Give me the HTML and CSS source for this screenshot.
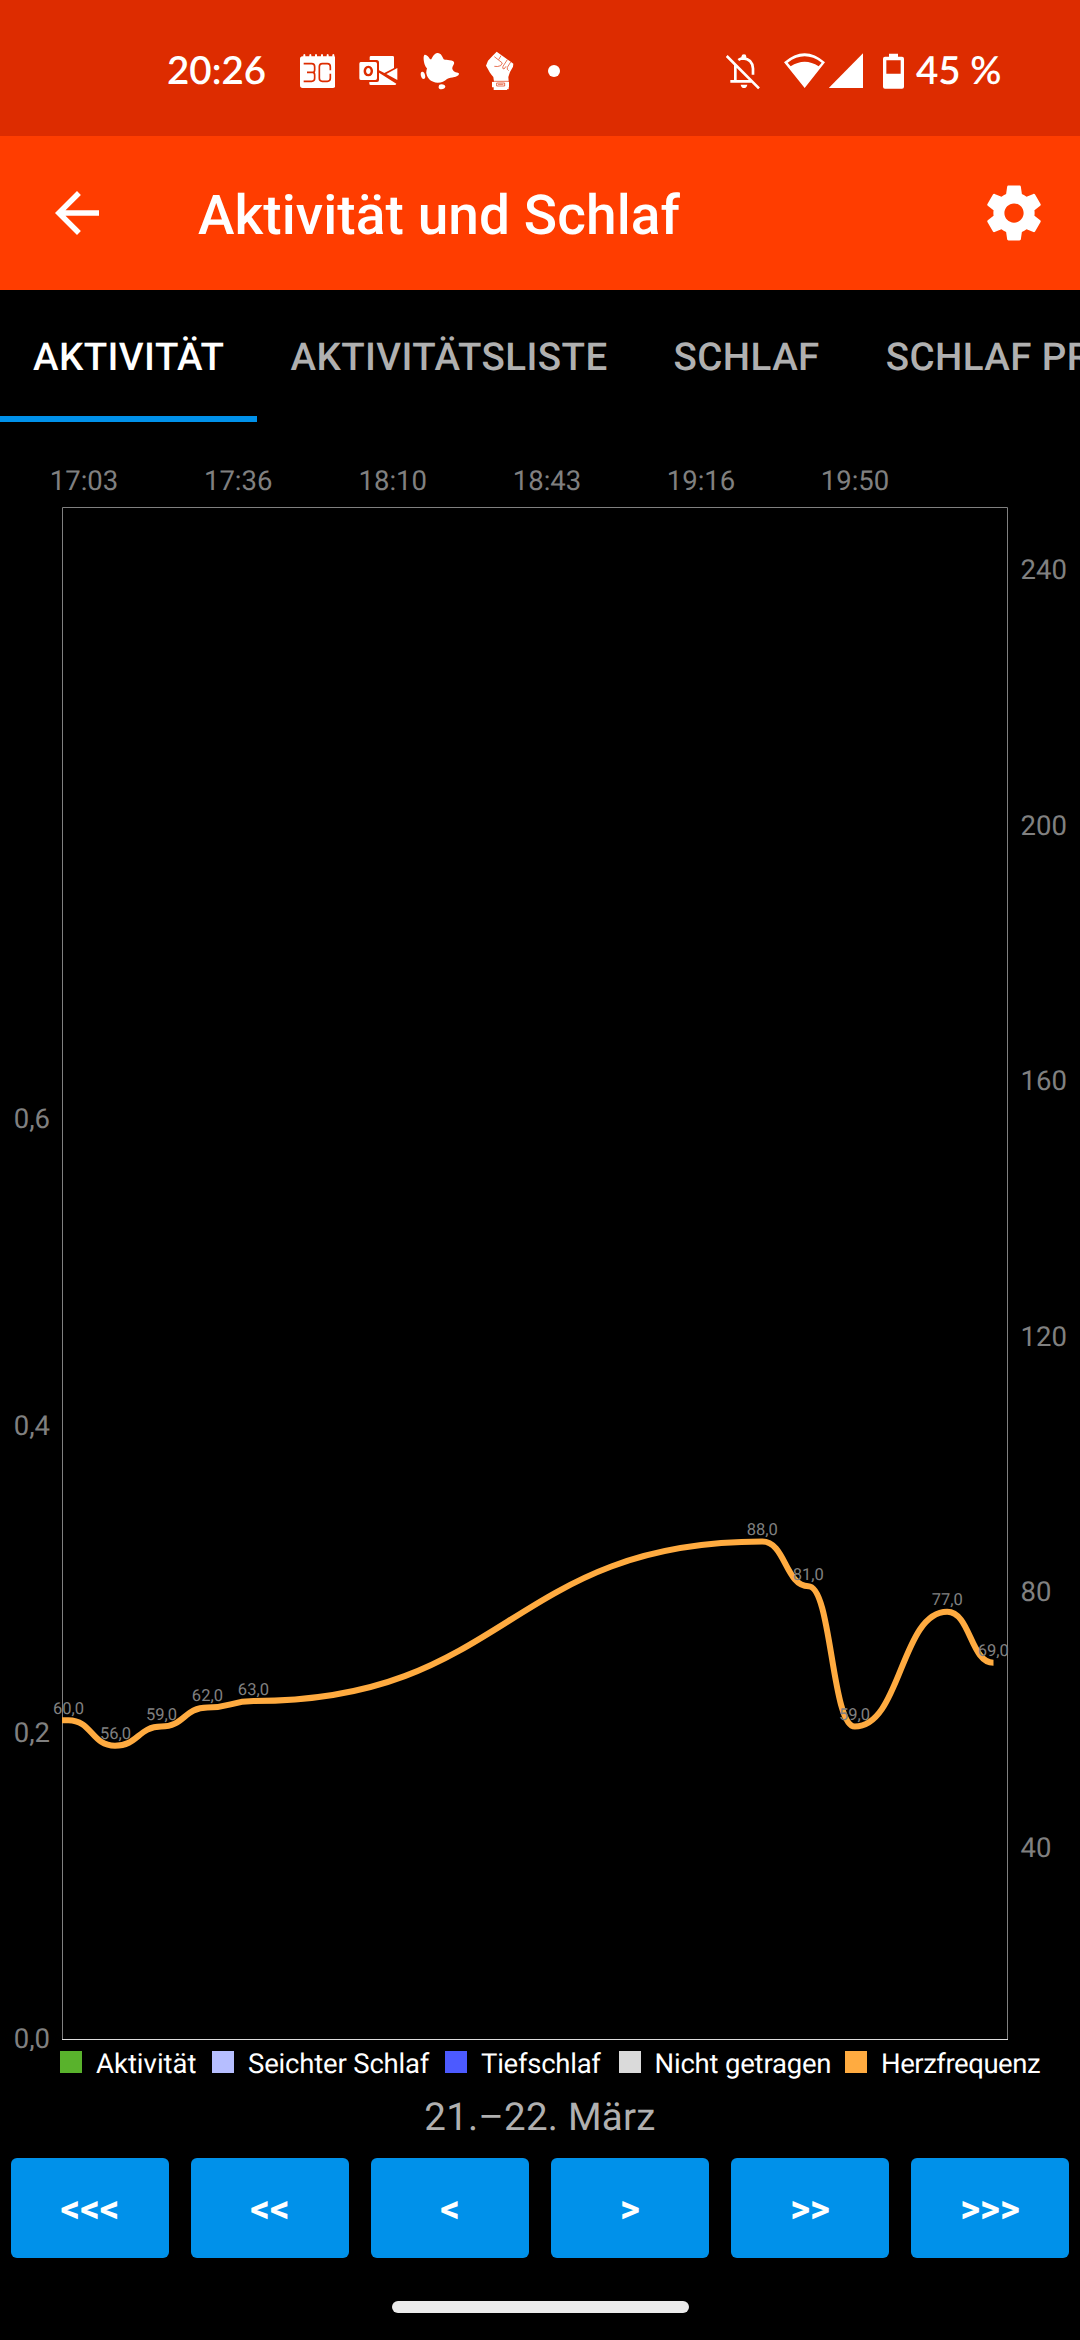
FILE: index.html
```html
<!DOCTYPE html>
<html lang="de">
<head>
<meta charset="utf-8">
<title>Aktivität und Schlaf</title>
<link rel="stylesheet" href="styles.css">
</head>
<body>
<div class="status">
  <span class="clock">20:26</span>
  <svg class="cal" width="36" height="40" viewBox="477 60 108 120">
    <path fill="#fff" d="M486 79h4v-5q3-4 6 0v5h12v-5q3-4 6 0v5h11v-5q3-4 6 0v5h12v-5q3-4 6 0v5h11v-5q3-4 6 0v5h11v-5q3-4 6 0v5q3 1 3 6v81q0 8-8 8h-90q-8 0-8-8V87q0-8 8-8z"/>
    <path class="cut" d="M491 101h24q9 0 9 9v9q0 8-6 8h-17M518 127q6 0 6 8v10q0 9-9 9h-24M571 121v-11q0-9-9-9h-15q-9 0-9 9v35q0 9 9 9h15q9 0 9-9v-14"/>
  </svg>
  <svg class="outlook" width="39" height="40" viewBox="657 60 117 120">
    <path fill="#fff" fill-rule="evenodd" d="M662 96h44q5 0 5 5v44q0 5-5 5h-44q-4 0-4-5v-44q0-5 4-5zM685 107c-19 0-19 32 0 32s19-32 0-32zM685 114c9 0 9 18 0 18s-9-18 0-18z"/>
    <path fill="#fff" d="M693 78h65q4 0 4 4v32l-29 15-16-8V98q0-8-7-8h-21v-8q0-4 4-4zM772 114v36l-33-18zM717 128l52 33q-1 4-5 4h-72q-4 0-4-4v-5h23q6 0 6-6z"/>
  </svg>
  <svg class="splash" width="40" height="40" viewBox="840 60 120 120">
    <path fill="#fff" d="M853 75c5-3 14 6 17 13l4 0c4-8 9-18 18-19 11-1 15 11 19 19 5 3 11 1 18 3 9 1 15 3 13 10-2 6-6 10-5 15 1 6 6 9 10 11 5 1 11 2 10 5-1 6-9 8-14 9-8 2-15 2-22 6-7 7-16 11-28 11-19 0-31-12-34-28-1-5 1-10 2-15-9-7-13-34-8-40zM845 126c5-2 9 3 10 9 2 8 0 12-5 12-7-1-11-18-5-21zM904 163c8 0 12 3 12 7-1 4-5 7-12 8-6 0-9-4-8-8 1-5 3-7 8-7z"/>
  </svg>
  <svg class="fist" width="31" height="40" viewBox="1035 60 93 120">
    <path fill="#fff" d="M1070 65l50 36-1 9-9 16-5 15 1 13v24h-44v-23l-2-14c-8-8-14-20-22-34l6-15 14-15z"/>
    <path fill="#fff" d="M1056 155h51v17h-51zM1061 172h40v9h-40z"/>
    <path class="scratch" d="M1063 80l24 19-5 8q-9 4-19 2M1083 77l-7 12M1102 89l-13 20q-3 8 3 8l6-8M1112 96l-10 16q-2 7 4 10M1055 154h52"/>
    <path class="scratch" d="M1070 159h24v9h-24zM1074 163h16"/>
  </svg>
  <svg class="dot" width="12" height="40" viewBox="1224 60 36 120"><circle fill="#fff" cx="1242" cy="123" r="18"/></svg>
  <svg class="bell" width="34" height="40" viewBox="78 60 102 120">
    <path class="bell-line" d="M115 90q7-5 14-5c19 1 29 11 30 31v18M106 106v48M91 154h66M80 78l97 97"/>
    <path fill="#fff" d="M124 84v-4q1-7 8-7t7 7v6zM122 164h20q-2 10-10 10t-10-10z"/>
  </svg>
  <svg class="wifi" width="41" height="40" viewBox="252 60 123 120">
    <path fill="#fff" fill-rule="evenodd" d="M252 97q62-54 123 0l-61 77zM263 98l9 11q42-27 84 0l9-11q-51-38-102 0z"/>
  </svg>
  <svg class="signal" width="34" height="40" viewBox="387 60 102 120"><path fill="#fff" d="M489 70v104H386z"/></svg>
  <svg class="battery" width="21" height="40" viewBox="549 60 63 120">
    <path fill="#fff" fill-rule="evenodd" d="M567 71h27v9h12q6 0 6 6v84q0 6-6 6h-51q-6 0-6-6V86q0-6 6-6h12zM559 91v40h43V91z"/>
  </svg>
  <span class="percent">45 %</span>
</div>

<header class="toolbar">
  <svg width="66" height="66" viewBox="0 0 24 24"><path fill="#fff" d="M20 11H7.83l5.59-5.59L12 4l-8 8 8 8 1.41-1.41L7.83 13H20v-2z"/></svg>
  <h1>Aktivität und Schlaf</h1>
  <svg width="66" height="66" viewBox="0 0 24 24"><path fill="#fff" d="M19.43 12.98c.04-.32.07-.64.07-.98s-.03-.66-.07-.98l2.11-1.65c.19-.15.24-.42.12-.64l-2-3.46c-.12-.22-.39-.3-.61-.22l-2.49 1c-.52-.4-1.08-.73-1.69-.98l-.38-2.65C14.46 2.18 14.25 2 14 2h-4c-.25 0-.46.18-.49.42l-.38 2.65c-.61.25-1.17.59-1.69.98l-2.49-1c-.23-.09-.49 0-.61.22l-2 3.46c-.13.22-.07.49.12.64l2.11 1.65c-.04.32-.07.65-.07.98s.03.66.07.98l-2.11 1.65c-.19.15-.24.42-.12.64l2 3.46c.12.22.39.3.61.22l2.49-1c.52.4 1.08.73 1.69.98l.38 2.65c.03.24.24.42.49.42h4c.25 0 .46-.18.49-.42l.38-2.65c.61-.25 1.17-.59 1.69-.98l2.49 1c.23.09.49 0 .61-.22l2-3.46c.12-.22.07-.49-.12-.64l-2.11-1.65zM12 15.5c-1.93 0-3.5-1.57-3.5-3.5s1.57-3.5 3.5-3.5 3.5 1.57 3.5 3.5-1.57 3.5-3.5 3.5z"/></svg>
</header>

<nav class="tabs">
  <span class="tab active">AKTIVITÄT</span>
  <span class="tab">AKTIVITÄTSLISTE</span>
  <span class="tab">SCHLAF</span>
  <span class="tab">SCHLAF PRO WOCHE</span>
</nav>

<svg class="chart" width="1080" height="1629" viewBox="0 422 1080 1629">
  <g class="axis" text-anchor="middle">
    <text x="84" y="490">17:03</text><text x="238.2" y="490">17:36</text><text x="392.8" y="490">18:10</text>
    <text x="547" y="490">18:43</text><text x="701" y="490">19:16</text><text x="855" y="490">19:50</text>
  </g>
  <g class="axis" text-anchor="end">
    <text x="50" y="1128">0,6</text><text x="50" y="1434.5">0,4</text><text x="50" y="1741.5">0,2</text><text x="50" y="2048">0,0</text>
  </g>
  <g class="axis">
    <text x="1020.5" y="579">240</text><text x="1020.5" y="834.5">200</text><text x="1020.5" y="1090">160</text>
    <text x="1020.5" y="1345.5">120</text><text x="1020.5" y="1601">80</text><text x="1020.5" y="1856.5">40</text>
  </g>
  <path class="frame" d="M62.5 2039V507.5H1007.5V2039"/>
  <path class="base" d="M62 2039.5H1008"/>
  <path class="rate" d="M62 1720.2H68.5C91.8 1720.2 91.8 1745.8 115 1745.8S138.2 1726.6 161.2 1726.6S184.2 1707.5 207.4 1707.5S230.6 1701.1 253.6 1701.1C508 1701.1 508 1541.6 762.3 1541.6C785.4 1541.6 785.4 1586.2 808.5 1586.2S831.6 1726.6 854.8 1726.6C901 1726.6 901 1611.8 947.2 1611.8C970.4 1611.8 970.4 1662.8 993.5 1662.8"/>
  <g class="value" text-anchor="middle">
    <text x="68.5" y="1714">60,0</text><text x="115.5" y="1739">56,0</text><text x="161.5" y="1720">59,0</text>
    <text x="207.4" y="1701">62,0</text><text x="253.4" y="1695">63,0</text><text x="762.3" y="1535">88,0</text>
    <text x="808.3" y="1580">81,0</text><text x="854.5" y="1720">59,0</text><text x="947.3" y="1605">77,0</text>
    <text x="993.3" y="1656">69,0</text>
  </g>
</svg>

<div class="legend">
  <span class="key activity">Aktivität</span>
  <span class="key light">Seichter Schlaf</span>
  <span class="key deep">Tiefschlaf</span>
  <span class="key off">Nicht getragen</span>
  <span class="key heart">Herzfrequenz</span>
</div>
<div class="date">21.–22. März</div>
<div class="buttons">
  <button>&lt;&lt;&lt;</button><button>&lt;&lt;</button><button>&lt;</button><button>&gt;</button><button>&gt;&gt;</button><button>&gt;&gt;&gt;</button>
</div>
<div class="home"></div>
</body>
</html>
```
FILE: styles.css
```css
* { box-sizing: border-box; }
body {
  margin: 0;
  width: 1080px;
  height: 2340px;
  overflow: hidden;
  background: #000;
  color: #fff;
  font-family: Roboto, sans-serif;
  text-rendering: geometricPrecision;
  display: flex;
  flex-direction: column;
}
svg { display: block; flex: none; }

.status {
  flex: none;
  height: 136px;
  padding: 50px 0 0 167px;
  background: #dd2c00;
  display: flex;
  align-items: flex-start;
  font: 600 38.5px/40px Lato, sans-serif;
  white-space: nowrap;
}
.clock { width: 100px; }
.cal { margin-left: 32px; }
.outlook { margin-left: 24px; }
.splash { margin-left: 22px; }
.fist { margin-left: 25px; }
.dot { margin-left: 32px; }
.bell { margin-left: 166px; }
.wifi { margin-left: 24px; }
.signal { margin-left: 4px; }
.battery { margin-left: 20px; }
.percent { margin-left: 12px; }
.cut { fill: none; stroke: #dd2c00; stroke-width: 5; }
.scratch { fill: none; stroke: #dd2c00; stroke-width: 2; }
.bell-line { fill: none; stroke: #fff; stroke-width: 8; }

.toolbar {
  flex: none;
  height: 154px;
  padding: 0 33px 0 44px;
  background: #ff3d00;
  display: flex;
  align-items: center;
}
.toolbar h1 {
  margin: 6px auto 0 88px;
  font-size: 55px;
  line-height: 64px;
  font-weight: 500;
  letter-spacing: .09px;
}

.tabs {
  flex: none;
  height: 132px;
  display: flex;
  overflow: hidden;
  color: #b0b0b0;
  font-size: 38.5px;
  font-weight: 500;
  line-height: 46px;
  letter-spacing: .41px;
  white-space: nowrap;
}
.tab { flex: none; padding: 45px 33px 0; }
.active { color: #fff; border-bottom: 6px solid #0091ea; }

.chart { font-family: Roboto, sans-serif; }
.axis { fill: #808080; font-size: 27.5px; }
.value { fill: #808080; font-size: 16.5px; }
.frame { fill: none; stroke: #808080; stroke-width: 1; }
.base { stroke: #dcdcdc; stroke-width: 1; }
.rate { fill: none; stroke: #ffab40; stroke-width: 6; }

.legend {
  flex: none;
  height: 32px;
  padding-left: 60px;
  display: grid;
  grid-template-columns: 152px 233px 173.5px 226.5px auto;
  font-size: 27.5px;
  line-height: 25px;
  white-space: nowrap;
}
.key { display: flex; gap: 14px; }
.key::before { content: ""; width: 22px; height: 22px; }
.activity::before { background: #59b22c; }
.light { letter-spacing: -.18px; }
.light::before { background: #b6beff; }
.deep { letter-spacing: -.25px; }
.deep::before { background: #4c5aff; }
.off { letter-spacing: -.2px; }
.off::before { background: #dadada; }
.heart { letter-spacing: -.45px; }
.heart::before { background: #ffab40; }

.date {
  flex: none;
  height: 75px;
  padding-top: 12px;
  text-align: center;
  color: #b0b0b0;
  font-size: 38.5px;
  line-height: 46px;
  letter-spacing: .25px;
}
.buttons {
  flex: none;
  height: 100px;
  padding: 0 11px;
  display: grid;
  grid-template-columns: repeat(6, 1fr);
  gap: 22px;
}
.buttons button {
  padding: 2px 0 0;
  border: 0;
  border-radius: 6px;
  background: #0091ea;
  color: #fff;
  font: 700 38.5px/46px Roboto, sans-serif;
}
.home {
  flex: none;
  width: 297px;
  height: 12px;
  margin: 43px auto 0;
  border-radius: 6px;
  background: #ebebeb;
}
```
